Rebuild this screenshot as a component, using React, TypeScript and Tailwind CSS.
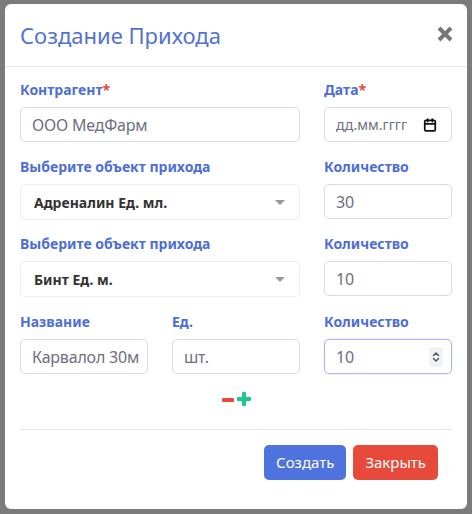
import { Calendar, ChevronsUpDown } from "lucide-react";

const font = { fontFamily: '"Noto Sans", "Open Sans", sans-serif' };

function Label({ children, required }: { children: React.ReactNode; required?: boolean }) {
  return (
    <label className="block text-[14px] font-bold text-[#4e6ed4] leading-5 mb-[7px]">
      {children}
      {required && <span className="text-[#e74a3b]">*</span>}
    </label>
  );
}

function TextInput({ value, focused }: { value: string; focused?: boolean }) {
  return (
    <div
      className={
        "h-[35px] rounded-[5px] border bg-white flex items-center pl-[11px] pr-2 text-[16px] text-[#6e707e] overflow-hidden whitespace-nowrap " +
        (focused ? "border-[#a9b9ef] shadow-[0_0_0_1px_rgba(78,115,223,0.08)]" : "border-[#d9dbe5]")
      }
    >
      <span className="flex-1 overflow-hidden tracking-[-0.2px]">{value}</span>
      {focused && (
        <span className="w-[14px] h-[20px] rounded-sm bg-[#f1f2f5] flex items-center justify-center text-[#555]">
          <ChevronsUpDown className="w-3 h-3" strokeWidth={3} />
        </span>
      )}
    </div>
  );
}

function SelectBox({ value }: { value: string }) {
  return (
    <div className="h-[36px] rounded-[5px] border border-[#eceef4] bg-white flex items-center pl-[13px] pr-[14px] text-[14px] font-bold text-[#333]">
      <span className="flex-1">{value}</span>
      <span className="w-0 h-0 border-l-[5px] border-r-[5px] border-t-[5px] border-l-transparent border-r-transparent border-t-[#999]" />
    </div>
  );
}

export default function App() {
  return (
    <div className="w-[472px] h-[514px] bg-[#7b7b7b] pt-[4px] pl-[5px]" style={font}>
      <div className="w-[462px] h-[505px] bg-white rounded-[6px] flex flex-col">
        <div className="h-[63px] flex items-center justify-between pl-[15px] pr-[14px] border-b border-[#e3e6f0]">
          <h2 className="text-[22px] text-[#5272d2] leading-none">Создание Прихода</h2>
          <svg width="16" height="16" viewBox="0 0 16 16" className="-mt-[3px]">
            <path d="M2 2L14 14M14 2L2 14" stroke="#777" strokeWidth="4" strokeLinecap="butt" />
          </svg>
        </div>

        <div className="px-[15px] pt-[13px]">
          <div className="grid grid-cols-3 gap-x-6">
            <div className="col-span-2">
              <Label required>Контрагент</Label>
              <TextInput value="ООО МедФарм" />
            </div>
            <div>
              <Label required>Дата</Label>
              <div className="h-[35px] rounded-[5px] border border-[#d9dbe5] flex items-center pl-[11px] pr-[14px] text-[14px] text-[#6e707e]">
                <span className="flex-1">дд.мм.гггг</span>
                <Calendar className="w-[14px] h-[14px] text-[#111]" strokeWidth={3} />
              </div>
            </div>

            <div className="col-span-2 mt-[15px]">
              <Label>Выберите объект прихода</Label>
              <SelectBox value="Адреналин Ед. мл." />
            </div>
            <div className="mt-[15px]">
              <Label>Количество</Label>
              <TextInput value="30" />
            </div>

            <div className="col-span-2 mt-[14px]">
              <Label>Выберите объект прихода</Label>
              <SelectBox value="Бинт Ед. м." />
            </div>
            <div className="mt-[14px]">
              <Label>Количество</Label>
              <TextInput value="10" />
            </div>

            <div className="mt-[15px]">
              <Label>Название</Label>
              <TextInput value="Карвалол 30мг" />
            </div>
            <div className="mt-[15px]">
              <Label>Ед.</Label>
              <TextInput value="шт." />
            </div>
            <div className="mt-[15px]">
              <Label>Количество</Label>
              <TextInput value="10" focused />
            </div>
          </div>

          <div className="flex justify-center items-center gap-[3px] mt-[17px] h-[16px]">
            <span className="w-[12px] h-[4px] bg-[#e74a3b] rounded-[1px] mt-[1px]" />
            <span className="relative w-[14px] h-[14px]">
              <span className="absolute left-0 top-[5px] w-[14px] h-[4px] bg-[#1cc88a] rounded-[1px]" />
              <span className="absolute top-0 left-[5px] w-[4px] h-[14px] bg-[#1cc88a] rounded-[1px]" />
            </span>
          </div>

          <div className="border-t border-[#e3e6f0] mt-[22px]" />

          <div className="flex justify-end gap-[7px] pt-[15px] pr-[14px]">
            <button className="h-[35px] px-[12px] rounded-[5px] bg-[#4e73df] text-white text-[15px]">Создать</button>
            <button className="h-[35px] px-[12px] rounded-[5px] bg-[#e74a3b] text-white text-[15px]">Закрыть</button>
          </div>
        </div>
      </div>
    </div>
  );
}
